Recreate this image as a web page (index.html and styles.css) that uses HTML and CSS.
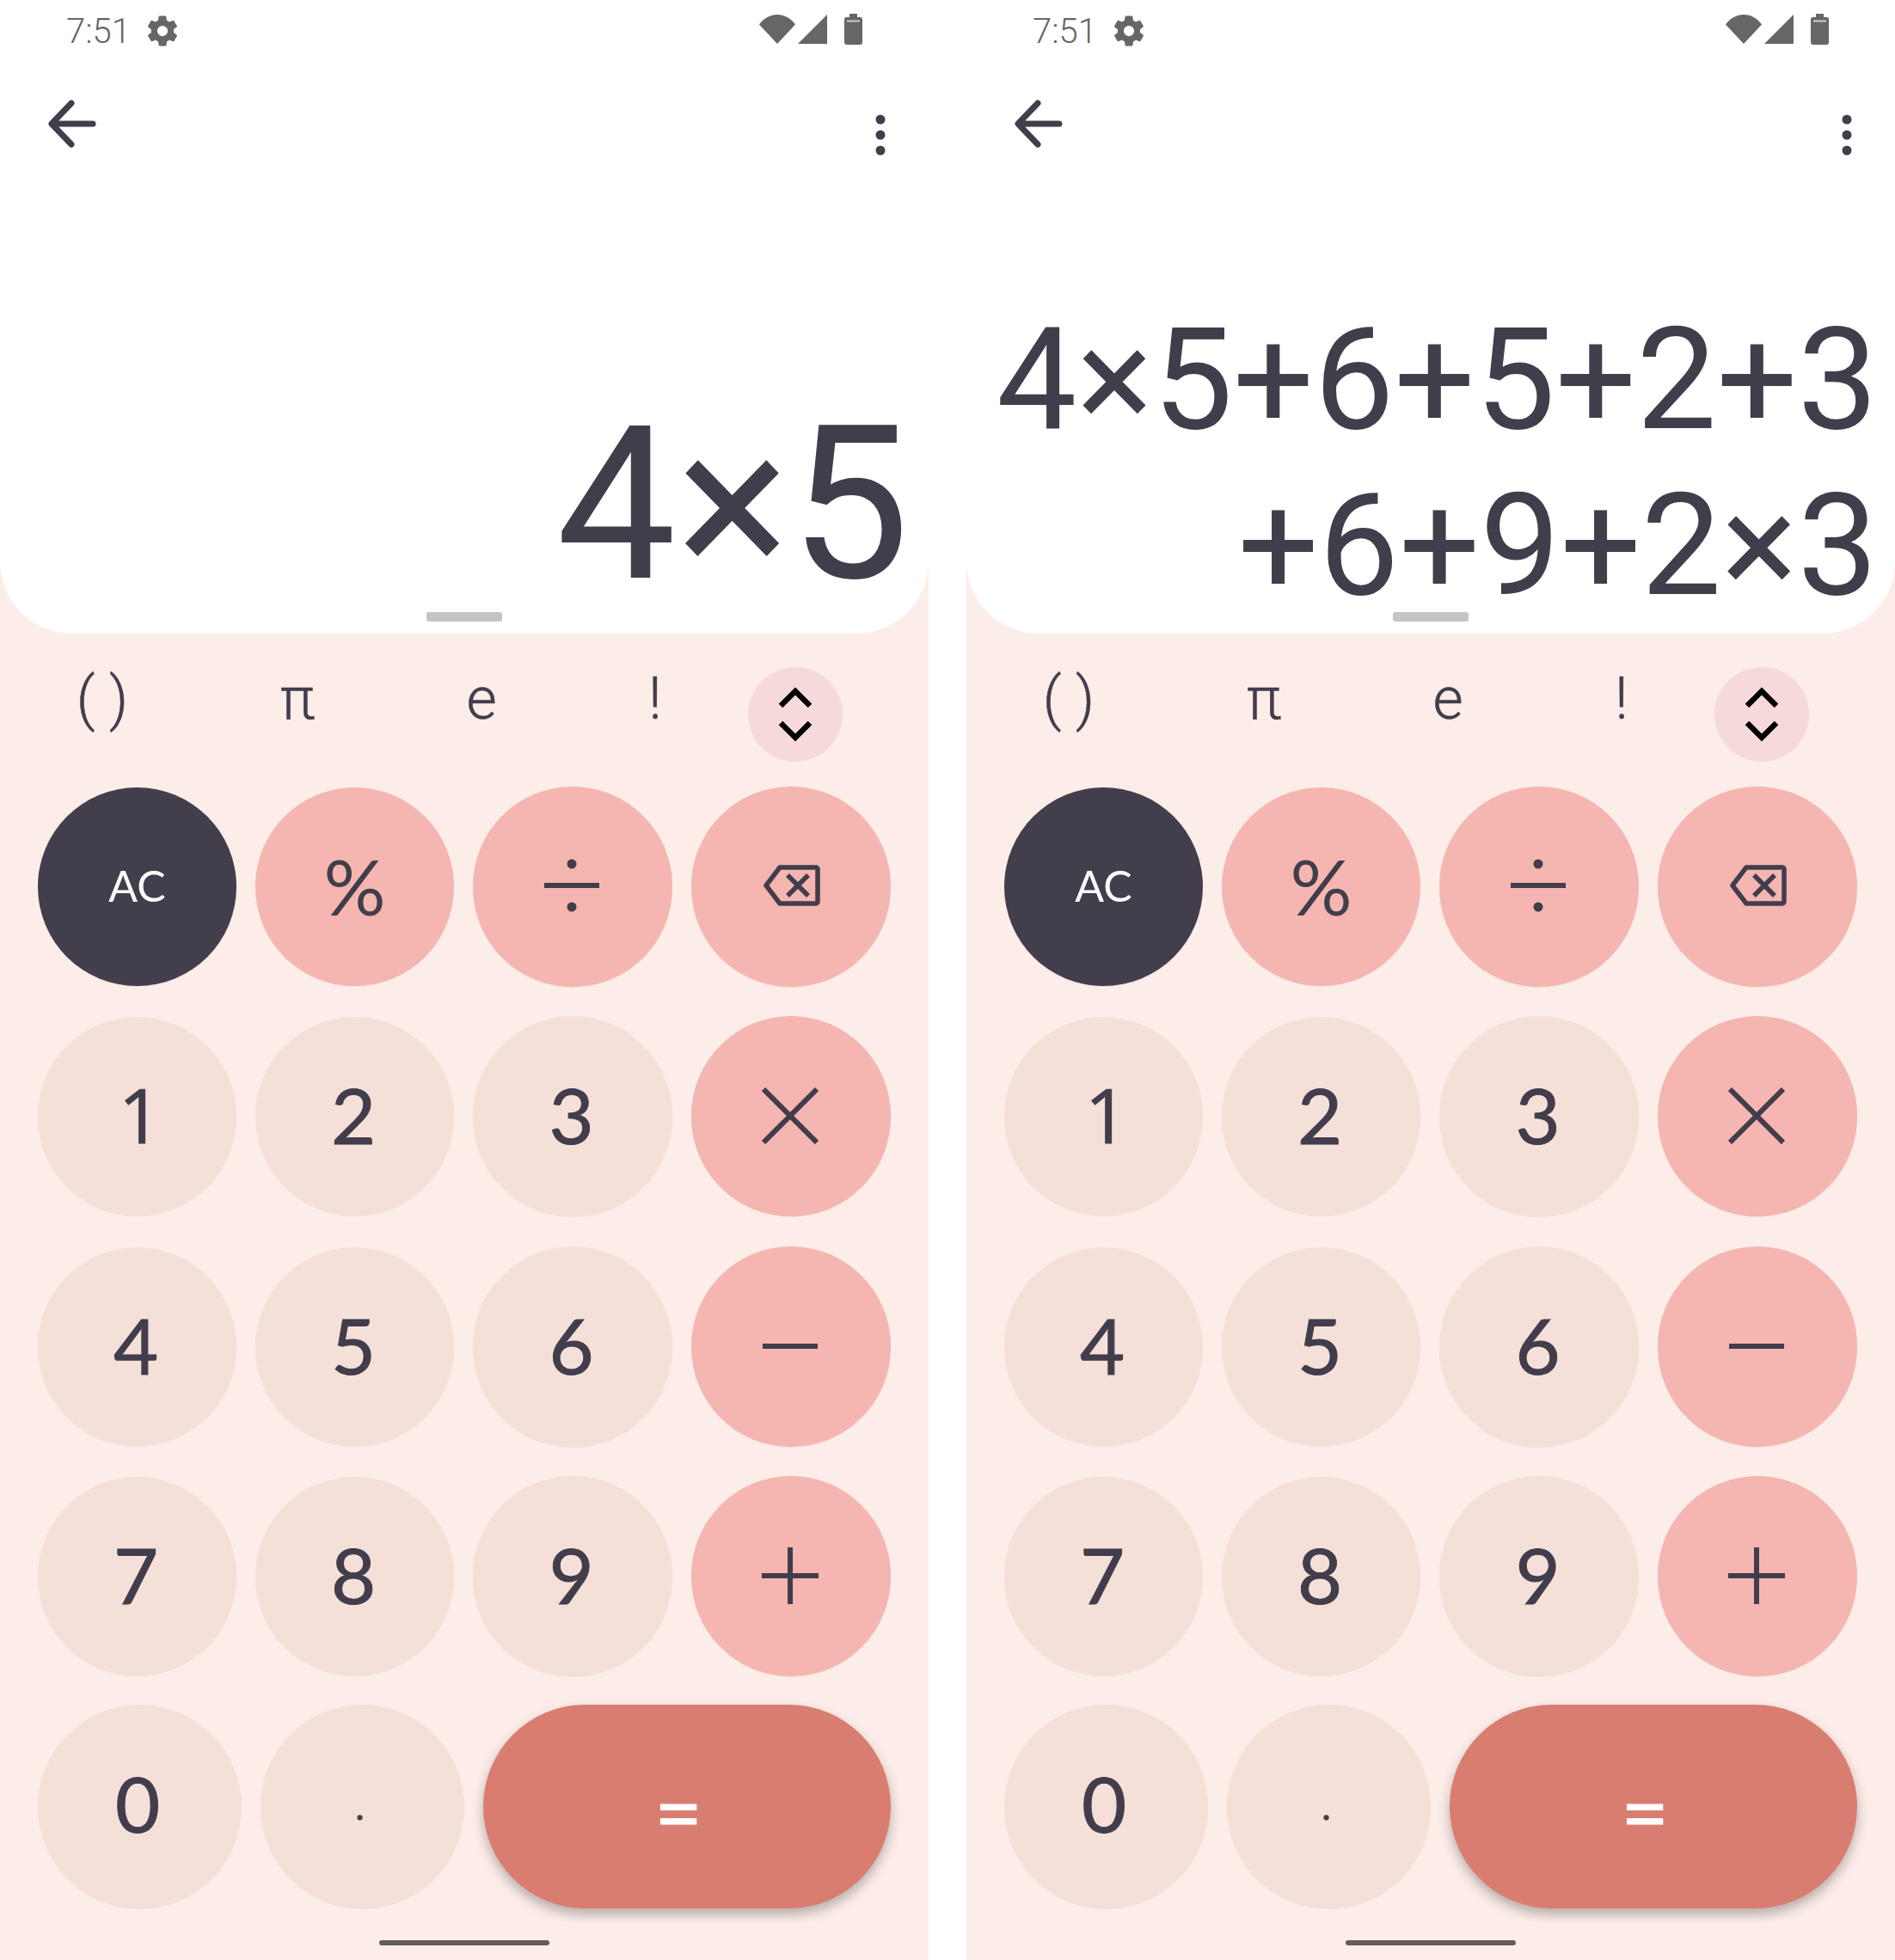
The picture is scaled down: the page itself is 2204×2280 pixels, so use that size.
FILE: index.html
```html
<!DOCTYPE html>
<html lang="en">
    <head>
        <meta charset="UTF-8">
        <title>Calculator</title>
        <link rel="stylesheet" href="styles.css">
    </head>
    <body>
        <svg class="defs" width="0" height="0">
            <defs>
                <symbol id="gear" viewBox="0 0 24 24"><path d="M19.4 13c.04-.33.06-.66.06-1s-.02-.67-.06-1l2.1-1.65c.2-.15.25-.42.12-.64l-2-3.46c-.12-.22-.38-.3-.6-.22l-2.5 1c-.52-.4-1.08-.73-1.7-.98l-.37-2.65A.5.5 0 0 0 14 2h-4a.5.5 0 0 0-.5.42l-.37 2.65c-.62.25-1.18.58-1.7.98l-2.5-1c-.22-.08-.48 0-.6.22l-2 3.46c-.13.22-.08.49.12.64L4.56 11c-.04.33-.06.66-.06 1s.02.67.06 1l-2.1 1.65c-.2.15-.25.42-.12.64l2 3.46c.12.22.38.3.6.22l2.5-1c.52.4 1.08.73 1.7.98l.37 2.65c.04.24.25.42.5.42h4c.25 0 .46-.18.5-.42l.37-2.65c.62-.25 1.18-.58 1.7-.98l2.5 1c.22.08.48 0 .6-.22l2-3.46c.13-.22.08-.49-.12-.64L19.4 13zM12 15.5a3.5 3.5 0 1 1 0-7 3.5 3.5 0 0 1 0 7z"/></symbol>
                <symbol id="wifi" viewBox="0 0 42 34"><path d="M0 11.5C5.500 4 13 0 21 0s15.500 4 21 11.500L21 34z"/></symbol>
                <symbol id="signal" viewBox="0 0 34 34"><path d="M34 0v34H0z"/></symbol>
                <symbol id="battery" viewBox="0 0 21 36"><path d="M6 0h9v4h3.500a2.500 2.500 0 0 1 2.500 2.500V33a3 3 0 0 1-3 3H3a3 3 0 0 1-3-3V6.500A2.500 2.500 0 0 1 2.500 4H6z"/><path d="M3 7.500h15v2H3z" fill="#ccc"/></symbol>
                <symbol id="back" viewBox="0 0 58 56"><path d="M53 28H6M28 4 5 28l23 24" fill="none" stroke="currentColor" stroke-width="7" stroke-linecap="round" stroke-linejoin="round"/></symbol>
                <symbol id="more" viewBox="0 0 12 50"><circle cx="6" cy="6" r="5.500"/><circle cx="6" cy="24" r="5.500"/><circle cx="6" cy="42" r="5.500"/></symbol>
                <symbol id="toggle" viewBox="0 0 40 64"><path d="M3 22 20 5l17 17M3 42l17 17 17-17" fill="none" stroke="#000" stroke-width="6.500"/></symbol>
                <symbol id="divide" viewBox="0 0 66 66"><path d="M1 33h64" fill="none" stroke="currentColor" stroke-width="6"/><circle cx="33" cy="8" r="5.500"/><circle cx="33" cy="58" r="5.500"/></symbol>
                <symbol id="backspace" viewBox="0 0 66 48"><path d="M19 3h42a2 2 0 0 1 2 2v38a2 2 0 0 1-2 2H19L3 24z" fill="none" stroke="currentColor" stroke-width="5.500" stroke-linejoin="round"/><path d="M28 12l24 24M52 12 28 36" fill="none" stroke="currentColor" stroke-width="5.500"/></symbol>
                <symbol id="times" viewBox="0 0 66 66"><path d="M2 2l62 62M64 2 2 64" fill="none" stroke="currentColor" stroke-width="6"/></symbol>
                <symbol id="minus" viewBox="0 0 66 66"><path d="M1 33h64" fill="none" stroke="currentColor" stroke-width="6"/></symbol>
                <symbol id="plus" viewBox="0 0 66 66"><path d="M0 33h66M33 0v66" fill="none" stroke="currentColor" stroke-width="6"/></symbol>
            </defs>
        </svg>

        <div class="screens">
            <div class="phone">
                <div class="top">
                    <div class="status">
                        <span class="clock">7:51</span>
                        <svg class="ic-gear"><use href="#gear"/></svg>
                        <span class="spacer"></span>
                        <svg class="ic-wifi"><use href="#wifi"/></svg>
                        <svg class="ic-signal"><use href="#signal"/></svg>
                        <svg class="ic-battery"><use href="#battery"/></svg>
                    </div>
                    <div class="toolbar">
                        <svg class="ic-back"><use href="#back"/></svg>
                        <svg class="ic-more"><use href="#more"/></svg>
                    </div>
                    <div class="display big">
                        <div>4×5</div>
                    </div>
                    <div class="handle"></div>
                </div>
                <div class="sci">
                    <span>( )</span>
                    <span>π</span>
                    <span>e</span>
                    <span>!</span>
                    <button class="toggle"><svg class="ic-toggle"><use href="#toggle"/></svg></button>
                </div>
                <div class="keys">
                    <div class="grid">
                        <button class="key clear">AC</button>
                        <button class="key op">%</button>
                        <button class="key op"><svg class="ic-op ic-div"><use href="#divide"/></svg></button>
                        <button class="key op"><svg class="ic-bksp"><use href="#backspace"/></svg></button>
                        <button class="key one">1</button>
                        <button class="key">2</button>
                        <button class="key">3</button>
                        <button class="key op"><svg class="ic-op"><use href="#times"/></svg></button>
                        <button class="key">4</button>
                        <button class="key">5</button>
                        <button class="key">6</button>
                        <button class="key op"><svg class="ic-op"><use href="#minus"/></svg></button>
                        <button class="key">7</button>
                        <button class="key">8</button>
                        <button class="key">9</button>
                        <button class="key op"><svg class="ic-op"><use href="#plus"/></svg></button>
                    </div>
                    <div class="last">
                        <button class="key">0</button>
                        <button class="key dot">.</button>
                        <button class="key equals">=</button>
                    </div>
                </div>
                <div class="nav"><div class="home"></div></div>
            </div>

            <div class="phone">
                <div class="top">
                    <div class="status">
                        <span class="clock">7:51</span>
                        <svg class="ic-gear"><use href="#gear"/></svg>
                        <span class="spacer"></span>
                        <svg class="ic-wifi"><use href="#wifi"/></svg>
                        <svg class="ic-signal"><use href="#signal"/></svg>
                        <svg class="ic-battery"><use href="#battery"/></svg>
                    </div>
                    <div class="toolbar">
                        <svg class="ic-back"><use href="#back"/></svg>
                        <svg class="ic-more"><use href="#more"/></svg>
                    </div>
                    <div class="display small">
                        <div>4×5+6+5+2+3</div>
                        <div>+6+9+2×3</div>
                    </div>
                    <div class="handle"></div>
                </div>
                <div class="sci">
                    <span>( )</span>
                    <span>π</span>
                    <span>e</span>
                    <span>!</span>
                    <button class="toggle"><svg class="ic-toggle"><use href="#toggle"/></svg></button>
                </div>
                <div class="keys">
                    <div class="grid">
                        <button class="key clear">AC</button>
                        <button class="key op">%</button>
                        <button class="key op"><svg class="ic-op ic-div"><use href="#divide"/></svg></button>
                        <button class="key op"><svg class="ic-bksp"><use href="#backspace"/></svg></button>
                        <button class="key one">1</button>
                        <button class="key">2</button>
                        <button class="key">3</button>
                        <button class="key op"><svg class="ic-op"><use href="#times"/></svg></button>
                        <button class="key">4</button>
                        <button class="key">5</button>
                        <button class="key">6</button>
                        <button class="key op"><svg class="ic-op"><use href="#minus"/></svg></button>
                        <button class="key">7</button>
                        <button class="key">8</button>
                        <button class="key">9</button>
                        <button class="key op"><svg class="ic-op"><use href="#plus"/></svg></button>
                    </div>
                    <div class="last">
                        <button class="key">0</button>
                        <button class="key dot">.</button>
                        <button class="key equals">=</button>
                    </div>
                </div>
                <div class="nav"><div class="home"></div></div>
            </div>
        </div>
    </body>
</html>
```

FILE: styles.css
```css
html, body {
    margin: 0;
    background: #fff;
}
.defs {
    position: absolute;
}
.screens {
    display: grid;
    grid-template-columns: 1080px 1080px;
    column-gap: 44px;
    height: 2280px;
    overflow: hidden;
}
.phone {
    display: flex;
    flex-direction: column;
    height: 2280px;
    background: #fcede9;
}

/* top sheet */
.top {
    display: flex;
    flex-direction: column;
    height: 737px;
    flex: none;
    background: #fff;
    border-radius: 0 0 84px 84px;
    color: #423d4b;
}
.status {
    display: flex;
    align-items: flex-start;
    height: 70px;
    flex: none;
    padding: 16px 77px 0 77px;
    box-sizing: border-box;
    color: #666;
    fill: #666;
    font-family: Roboto, sans-serif;
    font-weight: 300;
    font-size: 40px;
    line-height: 42px;
}
.spacer {
    flex: 1;
}
.ic-gear {
    width: 42px;
    height: 42px;
    margin: -1px 0 0 16px;
}
.ic-wifi {
    width: 42px;
    height: 34px;
    margin-top: 1px;
}
.ic-signal {
    width: 34px;
    height: 34px;
    margin: 1px 0 0 3px;
}
.ic-battery {
    width: 21px;
    height: 36px;
    margin: 0 0 0 20px;
}
.toolbar {
    display: flex;
    justify-content: space-between;
    align-items: flex-start;
    height: 100px;
    flex: none;
    padding: 0 50px 0 55px;
}
.ic-back {
    width: 58px;
    height: 56px;
    margin-top: 46px;
    color: #423d4b;
}
.ic-more {
    width: 12px;
    height: 50px;
    margin-top: 63px;
    fill: #423d4b;
}
.display {
    flex: 1;
    display: flex;
    flex-direction: column;
    justify-content: flex-end;
    align-items: flex-end;
    font-family: Roboto, sans-serif;
    white-space: nowrap;
}
.display.big {
    font-size: 248px;
    line-height: 256px;
    padding-right: 22px;
    margin-bottom: -4px;
}
.display.small {
    font-size: 166px;
    line-height: 193px;
    padding-right: 20px;
    margin-bottom: -19px;
}
.handle {
    width: 88px;
    height: 11px;
    flex: none;
    margin: 0 auto 14px;
    border-radius: 3px;
    background: #c4c4c4;
}

/* scientific row */
.sci {
    display: grid;
    grid-template-columns: 238px 216px 212px 192px 110px;
    height: 110px;
    flex: none;
    margin-top: 39px;
    color: #423d4b;
    font-family: Roboto, sans-serif;
    font-weight: 300;
    font-size: 68px;
    line-height: 74px;
    text-align: center;
    -webkit-text-stroke: 0.5px #423d4b;
}
.toggle {
    width: 110px;
    height: 110px;
    margin-left: 12px;
    padding: 0;
    border: none;
    border-radius: 50%;
    background: #f6d9da;
}
.ic-toggle {
    display: block;
    width: 40px;
    height: 64px;
    margin: 0 auto;
}

/* keypad */
.keys {
    flex: none;
    margin-top: 29px;
    padding: 0 44px 16px 44px;
    overflow: hidden;
}
.grid {
    display: grid;
    grid-template-columns: 231px 231px 232px 232px;
    grid-auto-rows: 231px;
    column-gap: 22px;
    row-gap: 36.33px;
    padding-top: 1px;
}
.grid .key:nth-child(4n+3),
.grid .key:nth-child(4n) {
    margin-top: -1px;
    margin-bottom: -1px;
}
.last {
    display: grid;
    grid-template-columns: 237px 237px 474px;
    height: 237px;
    column-gap: 22px;
    margin-top: 34px;
}
.last .key {
    padding: 0 5px 9px 0;
}
.key {
    display: flex;
    justify-content: center;
    align-items: center;
    padding: 0 3px 5px 0;
    border: none;
    border-radius: 119px;
    background: #f5e0d9;
    color: #423d4b;
    font-family: Lato, sans-serif;
    font-size: 90px;
    -webkit-text-stroke: 1px currentColor;
    box-shadow: 0 1px 1px rgba(0, 0, 0, 0.05);
}
.key.one {
    padding: 0 0 5px 7px;
    font-family: "Open Sans", sans-serif;
    font-size: 88px;
}
.key.op {
    background: #f5b5b0;
    padding: 0 0 4px 0;
    color: #423d4b;
    fill: #423d4b;
    -webkit-text-stroke: 0;
}
.key.clear {
    background: #433e4c;
    color: #fff;
    padding: 0 0 3px 0;
    font-size: 50px;
    -webkit-text-stroke: 0;
}
.last .key.dot {
    padding: 0 6px 0 0;
    font-size: 42px;
}
.last .key.equals {
    background: #d97d70;
    color: #fff;
    padding: 8px 20px 0 0;
    font-size: 96px;
    box-shadow: 0 7px 14px rgba(0, 0, 0, 0.28);
}
.ic-op {
    width: 66px;
    height: 66px;
    margin: 3px 2px 0 0;
}
.ic-div {
    margin: 1px 3px 0 0;
}
.ic-bksp {
    width: 66px;
    height: 48px;
    margin: 1px 0 0 1px;
}

/* gesture bar */
.nav {
    flex: 1;
    display: flex;
    justify-content: center;
    padding-top: 21px;
}
.home {
    width: 198px;
    height: 6px;
    border-radius: 3px;
    background: #625d5b;
}
```
